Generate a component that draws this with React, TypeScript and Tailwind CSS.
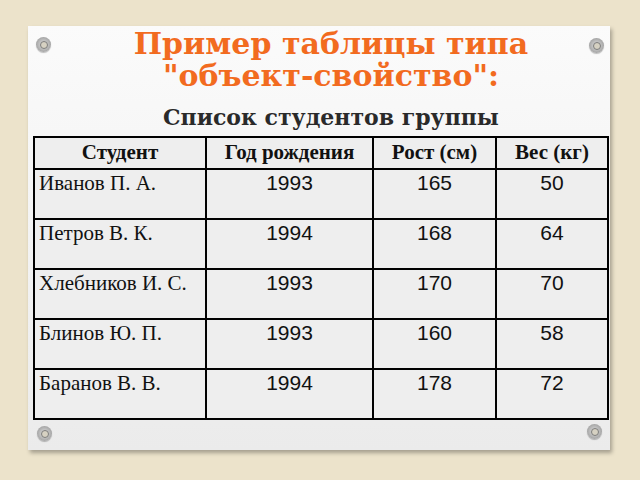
const rows = [
  { name: "Иванов П. А.", year: "1993", height: "165", weight: "50" },
  { name: "Петров В. К.", year: "1994", height: "168", weight: "64" },
  { name: "Хлебников И. С.", year: "1993", height: "170", weight: "70" },
  { name: "Блинов Ю. П.", year: "1993", height: "160", weight: "58" },
  { name: "Баранов В. В.", year: "1994", height: "178", weight: "72" },
];

const headers = ["Студент", "Год рождения", "Рост (см)", "Вес (кг)"];

function Pin() {
  return (
    <div className="flex h-[15px] w-[15px] shrink-0 items-center justify-center rounded-full bg-radial from-[#e4e4e4] to-[#8c8c8c] shadow-[0_1px_1px_rgba(0,0,0,0.25)]">
      <div className="h-[8px] w-[8px] rounded-full border border-[#7d7d7d] bg-[#d6d1c2]" />
    </div>
  );
}

export default function App() {
  const serif = "font-['Liberation_Serif',serif]";
  const sans = "font-['Liberation_Sans',Arial,sans-serif]";
  const cell = "border-r-2 border-b-2 border-black";

  return (
    <div className="h-[480px] w-[640px] overflow-hidden bg-[#ece3cb] pt-[26px] pl-[28px]">
      <div className="flex h-[424px] w-[582px] flex-col bg-linear-to-b from-[#fbfbfb] to-[#ebebeb] pt-[2px] shadow-[2px_3px_4px_rgba(0,0,0,0.3)]">
        {/* Heading with top pins */}
        <div className="flex items-start pl-[8px] pr-[6px]">
          <div className="mt-[9px]"><Pin /></div>
          <div className="flex-1 pl-[22px] text-center font-['DejaVu_Serif',serif] font-bold">
            <h1 className="text-[30px] leading-[32px] text-[#f26b1f]">
              Пример таблицы типа
              <br />
              "объект-свойство":
            </h1>
            <p className="mt-[12px] text-[22px] leading-[26px] text-[#2a2a2a]">Список студентов группы</p>
          </div>
          <div className="mt-[10px]"><Pin /></div>
        </div>

        {/* Table */}
        <div className="mt-[6px] ml-[5px] grid w-[576px] grid-cols-[172px_167px_123px_112px] border-l-2 border-t-2 border-black bg-[#eeeeee] text-[#111]">
          {headers.map((h) => (
            <div key={h} className={`${cell} ${serif} flex h-[32px] items-center justify-center text-[21px] font-bold`}>
              {h}
            </div>
          ))}
          {rows.map((r) => (
            <div key={r.name} className="contents">
              <div className={`${cell} ${serif} h-[50px] pl-[4px] pt-[1px] text-[21px] leading-[24px]`}>{r.name}</div>
              <div className={`${cell} ${sans} h-[50px] pt-[1px] text-center text-[21px] leading-[24px]`}>{r.year}</div>
              <div className={`${cell} ${sans} h-[50px] pt-[1px] text-center text-[21px] leading-[24px]`}>{r.height}</div>
              <div className={`${cell} ${sans} h-[50px] pt-[1px] text-center text-[21px] leading-[24px]`}>{r.weight}</div>
            </div>
          ))}
        </div>

        {/* Bottom pins */}
        <div className="mt-[6px] flex items-start justify-between pl-[9px] pr-[8px]">
          <Pin />
          <div className="-mt-[2px]"><Pin /></div>
        </div>
      </div>
    </div>
  );
}
